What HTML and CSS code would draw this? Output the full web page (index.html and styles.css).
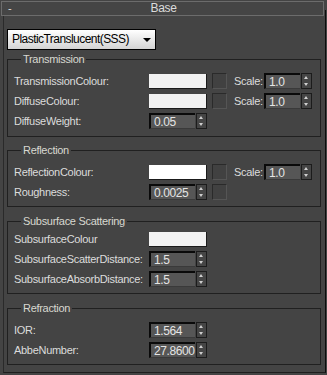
FILE: index.html
```html
<!DOCTYPE html>
<html lang="en">
<head>
    <meta charset="UTF-8">
    <meta name="viewport" content="width=device-width, initial-scale=1.0">
    <title>Base</title>
    <link rel="stylesheet" href="styles.css">
</head>
<body>

    <!-- Rollout header -->
    <div class="rollout-head">
        <span class="toggle">-</span>
        <span class="title">Base</span>
    </div>

    <div class="rollout-body">
        <div class="dropdown">
            <span>PlasticTranslucent(SSS)</span>
            <span class="arrow"></span>
        </div>

        <!-- Transmission -->
        <fieldset class="group g-trans">
            <legend>Transmission</legend>
            <div class="row">
                <span class="label">TransmissionColour:</span>
                <span class="swatch"></span>
                <span class="check"></span>
                <span class="scale">Scale:</span>
                <span class="spinner small"><span class="field">1.0</span><span class="arrows"></span></span>
            </div>
            <div class="row">
                <span class="label">DiffuseColour:</span>
                <span class="swatch"></span>
                <span class="check"></span>
                <span class="scale">Scale:</span>
                <span class="spinner small"><span class="field">1.0</span><span class="arrows"></span></span>
            </div>
            <div class="row">
                <span class="label">DiffuseWeight:</span>
                <span class="spinner"><span class="field">0.05</span><span class="arrows"></span></span>
            </div>
        </fieldset>

        <!-- Reflection -->
        <fieldset class="group g-refl">
            <legend>Reflection</legend>
            <div class="row">
                <span class="label">ReflectionColour:</span>
                <span class="swatch white"></span>
                <span class="check"></span>
                <span class="scale">Scale:</span>
                <span class="spinner small"><span class="field">1.0</span><span class="arrows"></span></span>
            </div>
            <div class="row">
                <span class="label">Roughness:</span>
                <span class="spinner"><span class="field">0.0025</span><span class="arrows"></span></span>
                <span class="check"></span>
            </div>
        </fieldset>

        <!-- Subsurface Scattering -->
        <fieldset class="group g-sss">
            <legend>Subsurface Scattering</legend>
            <div class="row">
                <span class="label">SubsurfaceColour</span>
                <span class="swatch"></span>
            </div>
            <div class="row">
                <span class="label">SubsurfaceScatterDistance:</span>
                <span class="spinner"><span class="field">1.5</span><span class="arrows"></span></span>
            </div>
            <div class="row">
                <span class="label">SubsurfaceAbsorbDistance:</span>
                <span class="spinner"><span class="field">1.5</span><span class="arrows"></span></span>
            </div>
        </fieldset>

        <!-- Refraction -->
        <fieldset class="group g-refr">
            <legend>Refraction</legend>
            <div class="row">
                <span class="label">IOR:</span>
                <span class="spinner"><span class="field">1.564</span><span class="arrows"></span></span>
            </div>
            <div class="row">
                <span class="label">AbbeNumber:</span>
                <span class="spinner"><span class="field">27.8600</span><span class="arrows"></span></span>
            </div>
        </fieldset>
    </div>

</body>
</html>
```

FILE: styles.css
```css
body {
    margin: 0;
    width: 327px;
    height: 375px;
    background: #444444;
    color: #dcdcdc;
    font-family: "Liberation Sans", Arial, sans-serif;
    font-size: 11px;
    line-height: 13px;
    letter-spacing: -0.3px;
    overflow: hidden;
}

.rollout-head {
    position: relative;
    z-index: 1;
    margin: 1px 3px 0 1px;
    height: 13px;
    border: 1px solid #6c6c6c;
    background: #454545;
    display: flex;
    align-items: center;
}

.toggle {
    width: 12px;
    padding-left: 6px;
}

.title {
    flex: 1;
    text-align: center;
    padding-right: 16px;
    font-size: 12px;
}

.rollout-body {
    margin: -6px 1px 0 3px;
    height: 343px;
    border-left: 1px solid #2a2a2a;
    border-right: 1px solid #0c0c0c;
    border-bottom: 1px solid #1e1e1e;
    padding: 19px 4px 0 3px;
}

.dropdown {
    width: 143px;
    height: 19px;
    padding: 0 0 0 4px;
    border: 1px solid #000;
    background: linear-gradient(#ffffff, #d4d4d4);
    color: #000;
    font-size: 12px;
    letter-spacing: -0.55px;
    display: flex;
    align-items: center;
    justify-content: space-between;
    margin-bottom: 3px;
}

.dropdown .arrow {
    width: 0;
    height: 0;
    margin-right: 4px;
    border-left: 4px solid transparent;
    border-right: 4px solid transparent;
    border-top: 4px solid #000;
}

.group {
    margin: 0;
    padding: 7px 6px 7px 6px;
    border: 1px solid #202020;
    display: flex;
    flex-direction: column;
    gap: 4px;
}

.group legend {
    padding: 0 2px;
    margin-left: 7px;
    color: #d8d8d0;
}

.g-refl { margin-top: 7px; padding-bottom: 6px; }
.g-sss { margin-top: 8px; padding-top: 3px; padding-bottom: 6px; }
.g-refr { margin-top: 8px; padding-bottom: 6px; }

.row {
    height: 16px;
    display: flex;
    align-items: center;
}

.label {
    width: 135px;
    flex: none;
    white-space: nowrap;
}

.swatch {
    width: 57px;
    height: 14px;
    background: #f2f2f2;
    border-right: 1px solid #1a1a1a;
    border-bottom: 1px solid #1a1a1a;
}

.swatch.white {
    background: #ffffff;
}

.check {
    width: 13px;
    height: 14px;
    margin-left: 5px;
    border: 1px solid #2a2a2a;
    border-right-color: #555;
    border-bottom-color: #555;
    background: #414141;
}

.scale {
    margin-left: 7px;
    width: 30px;
}

.spinner {
    display: flex;
    height: 16px;
}

.field {
    width: 41px;
    height: 13px;
    padding-left: 3px;
    border-top: 2px solid #0a0a0a;
    border-left: 2px solid #0a0a0a;
    border-bottom: 1px solid #3a3a3a;
    background: #565656;
    color: #e4e4e4;
    font-size: 12px;
    letter-spacing: -0.4px;
    line-height: 14px;
}

.spinner.small .field {
    width: 31px;
}

.arrows {
    position: relative;
    width: 9px;
    height: 14px;
    margin-left: 1px;
    border: 1px solid #1c1c1c;
    background: #454545;
}

.arrows::before,
.arrows::after {
    content: "";
    position: absolute;
    left: 2px;
    border-left: 2.5px solid transparent;
    border-right: 2.5px solid transparent;
}

.arrows::before {
    top: 2px;
    border-bottom: 3px solid #cfcfcf;
}

.arrows::after {
    bottom: 2px;
    border-top: 3px solid #cfcfcf;
}
```
